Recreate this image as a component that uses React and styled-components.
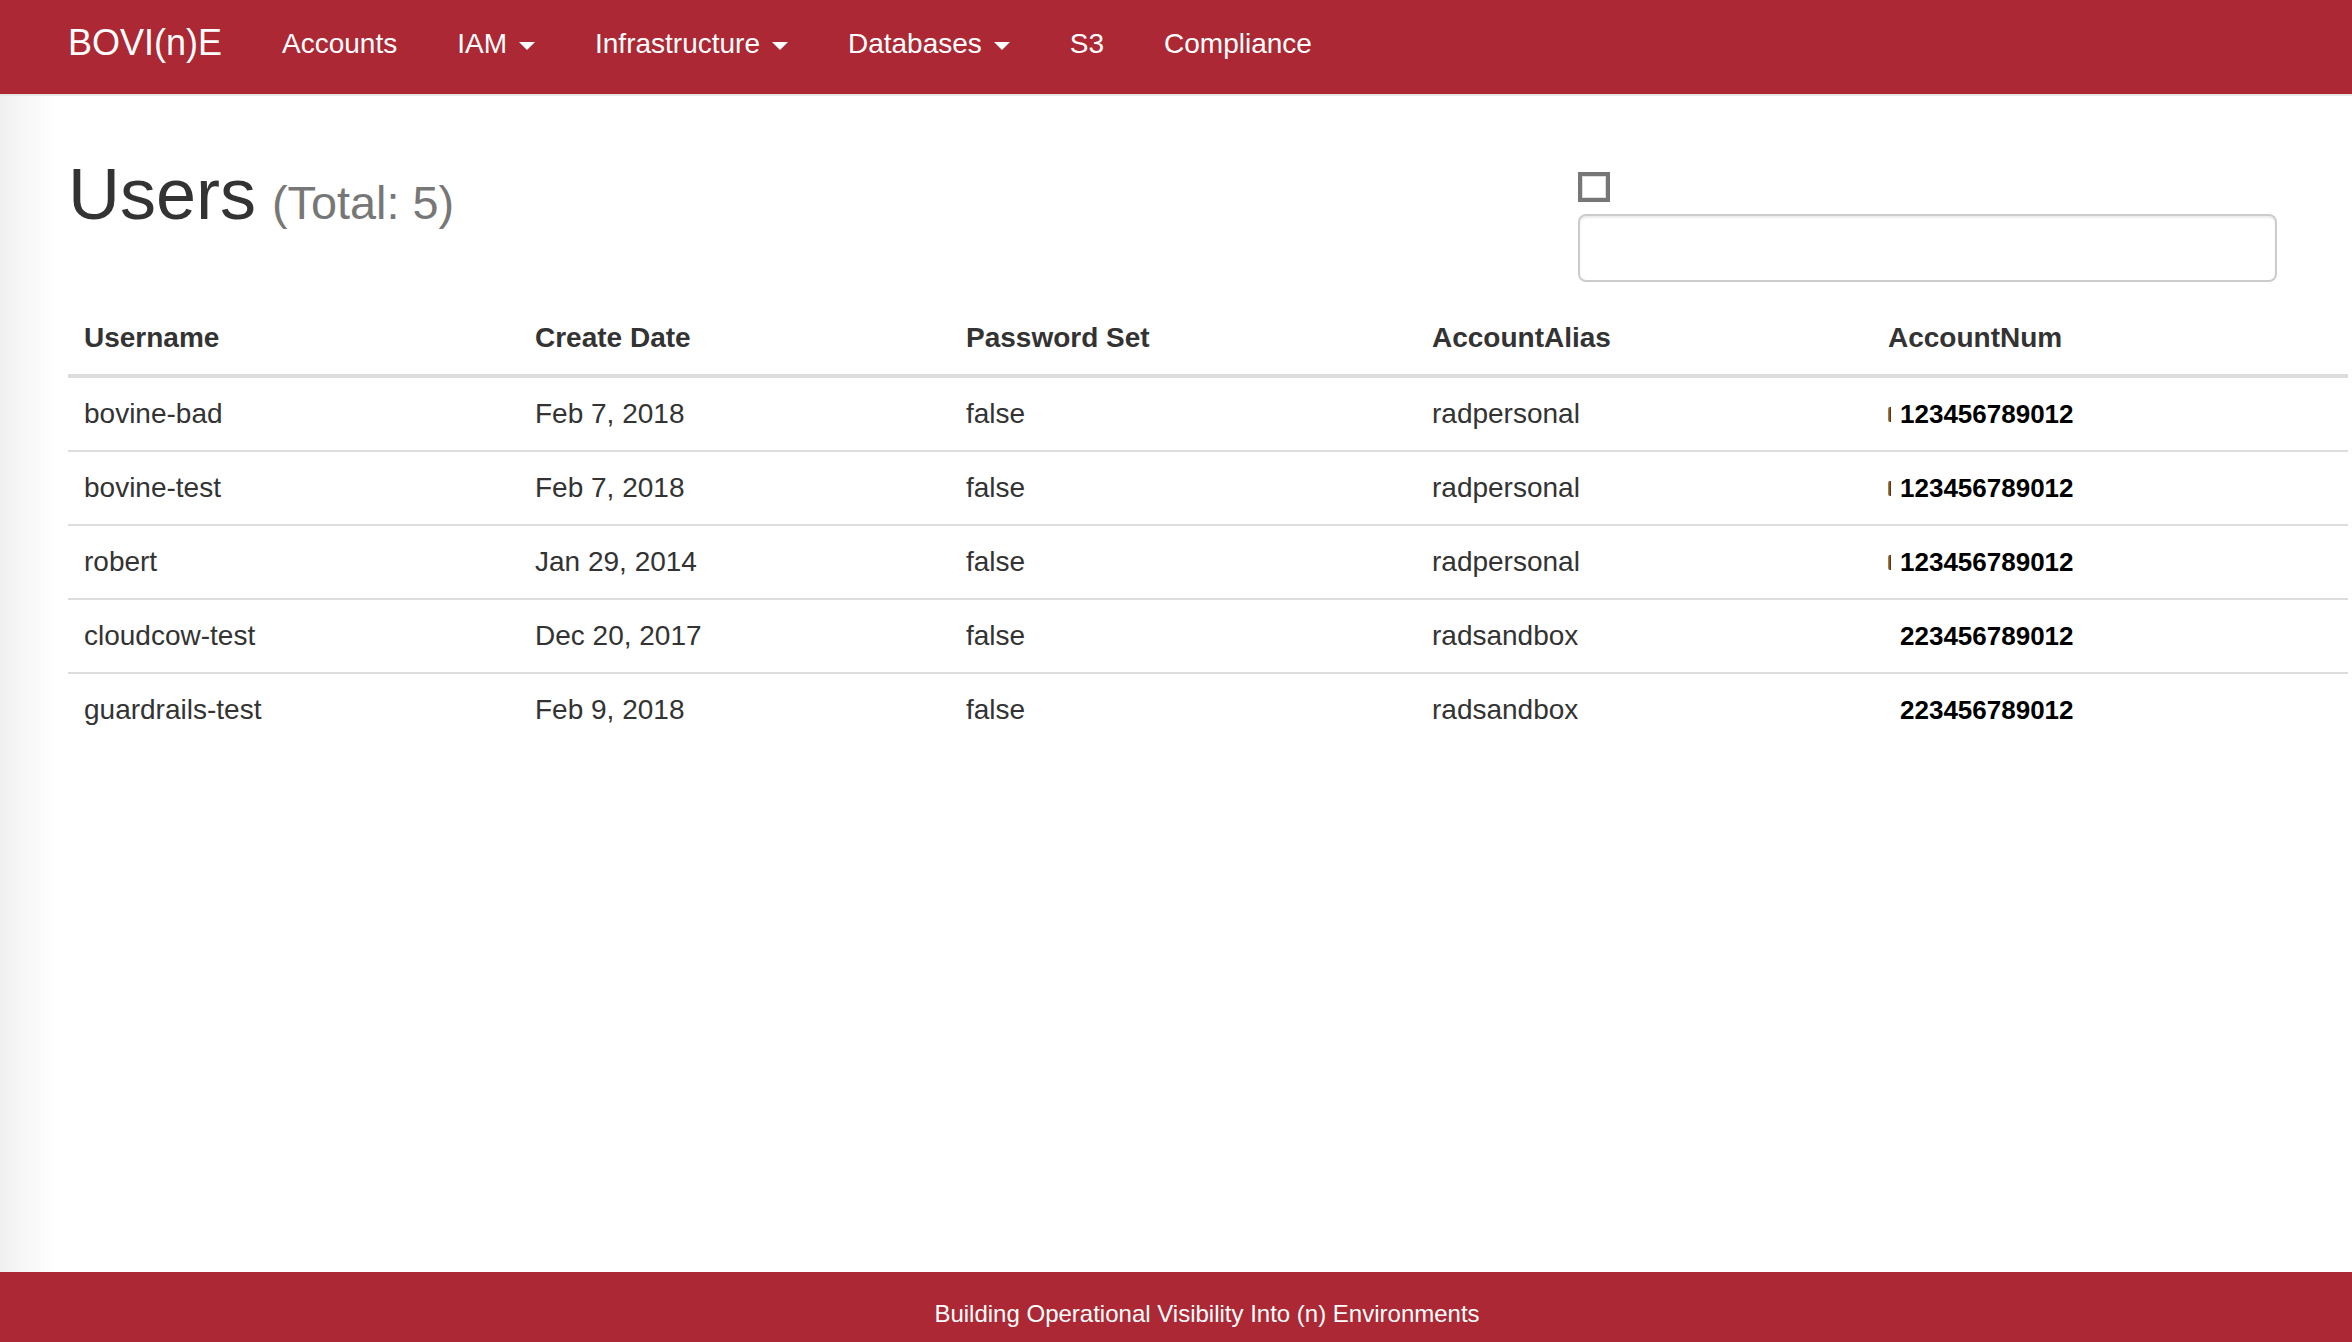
import React, { useState } from 'react';
import styled, { createGlobalStyle } from 'styled-components';

const users = [
  { name: 'bovine-bad', created: 'Feb 7, 2018', password: 'false', alias: 'radpersonal', num: '123456789012', mark: true },
  { name: 'bovine-test', created: 'Feb 7, 2018', password: 'false', alias: 'radpersonal', num: '123456789012', mark: true },
  { name: 'robert', created: 'Jan 29, 2014', password: 'false', alias: 'radpersonal', num: '123456789012', mark: true },
  { name: 'cloudcow-test', created: 'Dec 20, 2017', password: 'false', alias: 'radsandbox', num: '223456789012', mark: false },
  { name: 'guardrails-test', created: 'Feb 9, 2018', password: 'false', alias: 'radsandbox', num: '223456789012', mark: false },
];

const columns = [
  { label: 'Username', width: 451 },
  { label: 'Create Date', width: 431 },
  { label: 'Password Set', width: 466 },
  { label: 'AccountAlias', width: 456 },
  { label: 'AccountNum', width: 476 },
];

function App() {
  const [filter, setFilter] = useState('');
  const [checked, setChecked] = useState(false);

  return (
    <Page>
      <GlobalStyle />
      <Navbar>
        <Brand>BOVI(n)E</Brand>
        <NavLink>Accounts</NavLink>
        <NavLink>IAM<Caret /></NavLink>
        <NavLink>Infrastructure<Caret /></NavLink>
        <NavLink>Databases<Caret /></NavLink>
        <NavLink>S3</NavLink>
        <NavLink>Compliance</NavLink>
      </Navbar>

      <Main>
        <TopRow>
          <Title>
            Users <Small>(Total: {users.length})</Small>
          </Title>
          <Controls>
            <Checkbox type="checkbox" checked={checked} onChange={(e) => setChecked(e.target.checked)} />
            <SearchInput value={filter} onChange={(e) => setFilter(e.target.value)} />
          </Controls>
        </TopRow>

        <Table>
          <colgroup>
            {columns.map((c) => (
              <col key={c.label} style={{ width: c.width }} />
            ))}
          </colgroup>
          <thead>
            <tr>
              {columns.map((c) => (
                <Th key={c.label}>{c.label}</Th>
              ))}
            </tr>
          </thead>
          <tbody>
            {users
              .filter((u) => u.name.includes(filter.toLowerCase()))
              .map((u) => (
                <tr key={u.name}>
                  <Td>{u.name}</Td>
                  <Td>{u.created}</Td>
                  <Td>{u.password}</Td>
                  <Td>{u.alias}</Td>
                  <Td>
                    <NumCell>
                      <MarkSlot>{u.mark && <Mark />}</MarkSlot>
                      <AccountNum>{u.num}</AccountNum>
                    </NumCell>
                  </Td>
                </tr>
              ))}
          </tbody>
        </Table>
      </Main>

      <Footer>Building Operational Visibility Into (n) Environments</Footer>
    </Page>
  );
}

const GlobalStyle = createGlobalStyle`
  html, body {
    margin: 0;
    padding: 0;
  }
  body {
    font-family: "Liberation Sans", Arial, Helvetica, sans-serif;
    font-size: 28px;
    color: #333;
    background: #fff;
  }
`;

const Page = styled.div`
  display: flex;
  flex-direction: column;
  min-height: 100vh;
`;

const Navbar = styled.nav`
  display: flex;
  align-items: flex-start;
  height: 94px;
  padding-left: 38px;
  background-color: #ac2834;
  border-bottom: 2px solid #e7e7e7;
  flex-shrink: 0;
`;

const Brand = styled.a`
  font-size: 36px;
  line-height: 40px;
  padding: 23px 30px 0;
  color: #fff;
  cursor: pointer;
`;

const NavLink = styled.a`
  display: flex;
  align-items: center;
  font-size: 28px;
  line-height: 40px;
  padding: 24px 30px 0;
  color: #fff;
  cursor: pointer;
`;

const Caret = styled.span`
  display: inline-block;
  width: 0;
  height: 0;
  margin-left: 12px;
  margin-top: 4px;
  border-top: 8px solid #fff;
  border-left: 8px solid transparent;
  border-right: 8px solid transparent;
`;

const Main = styled.main`
  flex: 1;
  padding: 0 4px 0 68px;
  background: linear-gradient(to right, #f0f0f0 0, #f8f8f8 28px, #fff 56px);
`;

const TopRow = styled.div`
  display: flex;
  justify-content: space-between;
  align-items: flex-start;
  height: 206px;
`;

const Title = styled.h1`
  margin: 59px 0 0;
  font-size: 72px;
  font-weight: 400;
  line-height: 79px;
  color: #333;
`;

const Small = styled.small`
  font-size: 46.8px;
  color: #777;
  margin-left: -4px;
`;

const Controls = styled.div`
  display: flex;
  flex-direction: column;
  align-items: flex-start;
  gap: 12px;
  width: 699px;
  margin-right: 71px;
  padding-top: 76px;
`;

const Checkbox = styled.input`
  appearance: none;
  width: 32px;
  height: 30px;
  margin: 0;
  border: 4px solid #777;
  box-shadow: inset 0 0 0 1px #ddd;
  background: #fff;
  cursor: pointer;

  &:checked {
    background: #777;
  }
`;

const SearchInput = styled.input`
  box-sizing: border-box;
  width: 100%;
  height: 68px;
  padding: 12px 24px;
  font-size: 28px;
  font-family: inherit;
  border: 2px solid #ccc;
  border-radius: 8px;
  box-shadow: inset 0 2px 2px rgba(0, 0, 0, 0.075);
  outline: none;
`;

const Table = styled.table`
  width: 2280px;
  table-layout: fixed;
  border-collapse: collapse;
  border-spacing: 0;
`;

const Th = styled.th`
  text-align: left;
  padding: 16px;
  font-size: 28px;
  font-weight: 700;
  line-height: 40px;
  color: #333;
  border-bottom: 4px solid #ddd;
`;

const Td = styled.td`
  padding: 16px;
  font-size: 28px;
  line-height: 40px;
  height: 40px;
  color: #333;
  border-top: 2px solid #ddd;
  white-space: nowrap;
`;

const NumCell = styled.div`
  display: flex;
  align-items: center;
  height: 40px;
`;

const MarkSlot = styled.span`
  display: inline-flex;
  width: 12px;
  flex-shrink: 0;
`;

const Mark = styled.span`
  display: block;
  width: 3px;
  height: 15px;
  border-radius: 2px 0 0 2px;
  background: linear-gradient(to right, #c98a3c, #3a2a1a);
`;

const AccountNum = styled.span`
  font-size: 26px;
  line-height: 40px;
  font-weight: 700;
  color: #000;
`;

const Footer = styled.footer`
  box-sizing: border-box;
  flex-shrink: 0;
  height: 70px;
  padding: 30px 0 0 62px;
  background-color: #ac2834;
  color: #fff;
  font-size: 24px;
  line-height: 24px;
  text-align: center;
`;

export default App;
